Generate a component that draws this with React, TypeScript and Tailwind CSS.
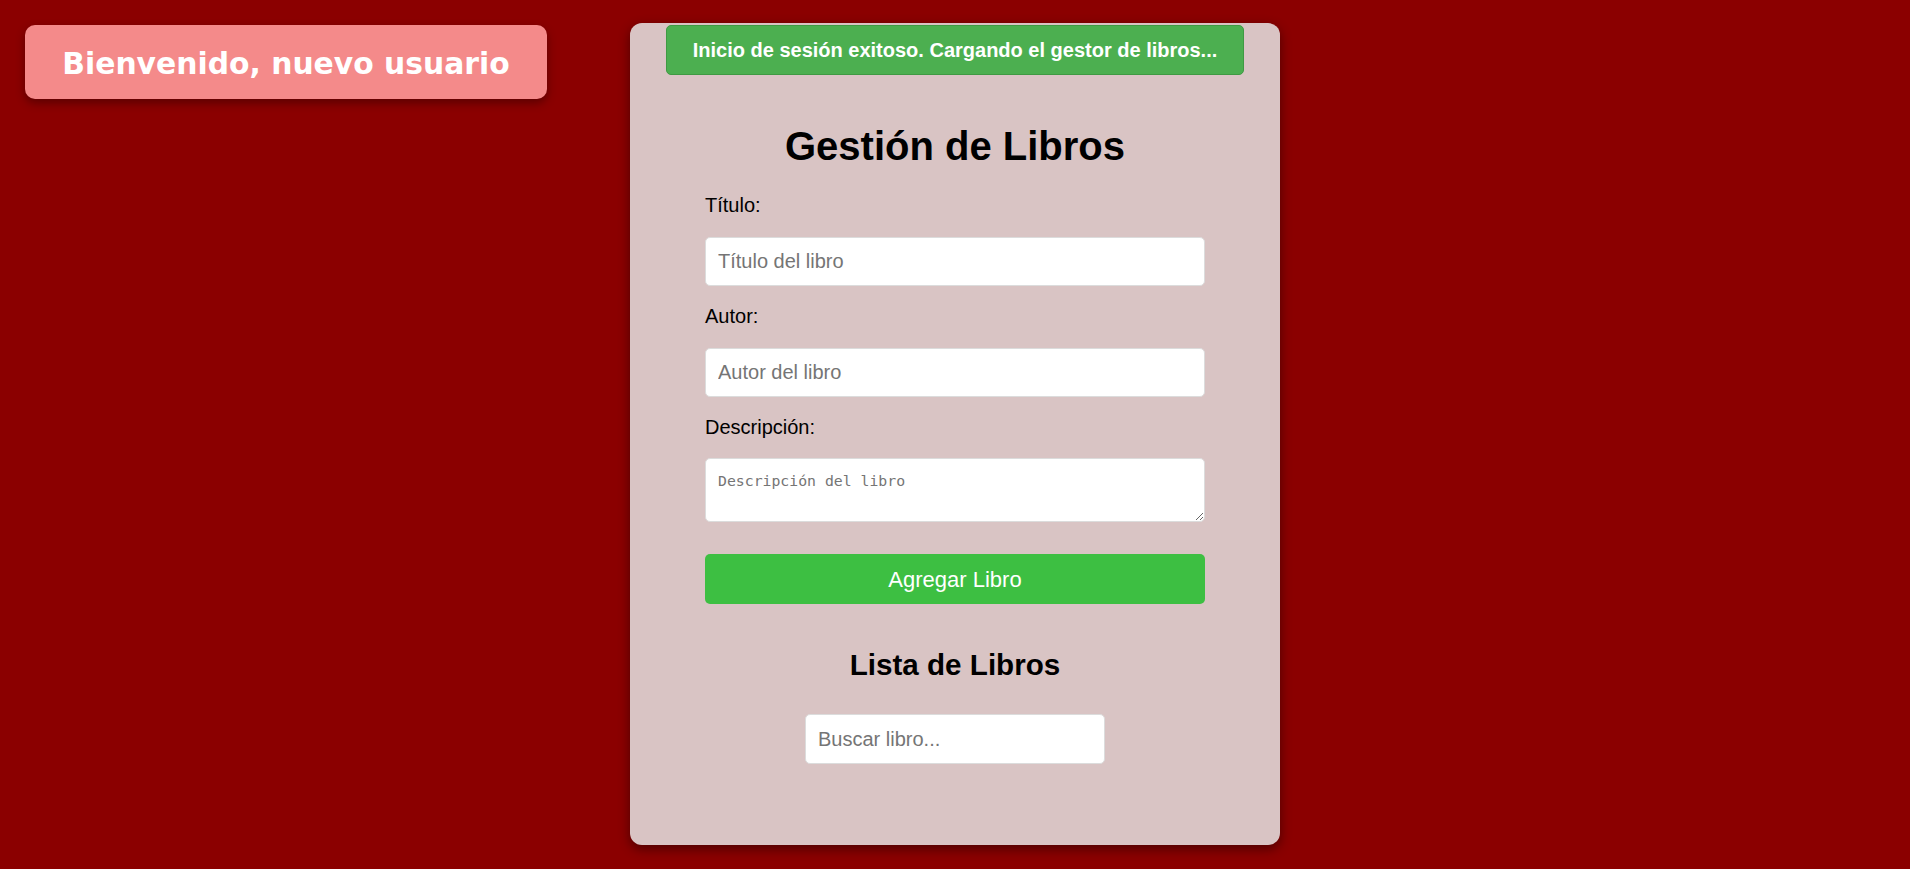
import React from "react";

export default function App() {
  return (
    <div className="min-h-[869px] w-full bg-[#8b0000] font-['Liberation_Sans',Arial,sans-serif] flex items-start">
      {/* welcome badge */}
      <div className="ml-[25px] mt-[25px] w-[522px] h-[74px] shrink-0 flex items-center justify-center pt-[4px] rounded-[10px] bg-[#f48a8a] shadow-[0_4px_10px_rgba(0,0,0,0.35)]">
        <span className="font-['DejaVu_Sans',Verdana,sans-serif] font-bold text-[29.8px] text-white leading-none">
          Bienvenido, nuevo usuario
        </span>
      </div>

      {/* book manager card */}
      <div className="ml-[83px] mt-[23px] w-[650px] h-[822px] shrink-0 rounded-[12px] bg-[#d9c4c4] shadow-[0_4px_12px_rgba(0,0,0,0.45)] flex flex-col items-center">
        <div className="mt-[2px] w-[578px] h-[50px] rounded-[5px] border border-[#3f9a43] bg-[#4caf50] flex items-center justify-center">
          <span className="text-white font-bold text-[20px] leading-none">
            Inicio de sesión exitoso. Cargando el gestor de libros...
          </span>
        </div>

        <h1 className="mt-[48px] text-[40px] leading-[46px] font-bold text-black">Gestión de Libros</h1>

        <form className="w-[500px] mt-[25px] flex flex-col" onSubmit={(e) => e.preventDefault()}>
          <label className="text-[20px] leading-[23px] text-black">Título:</label>
          <input
            type="text"
            placeholder="Título del libro"
            className="mt-[20px] h-[49px] w-full rounded-[5px] border border-[#dcdcdc] bg-white px-3 text-[20px] text-black placeholder:text-[#757575] outline-none"
          />
          <label className="mt-[19px] text-[20px] leading-[23px] text-black">Autor:</label>
          <input
            type="text"
            placeholder="Autor del libro"
            className="mt-[20px] h-[49px] w-full rounded-[5px] border border-[#dcdcdc] bg-white px-3 text-[20px] text-black placeholder:text-[#757575] outline-none"
          />
          <label className="mt-[19px] text-[20px] leading-[23px] text-black">Descripción:</label>
          <textarea
            placeholder="Descripción del libro"
            className="mt-[19px] h-[64px] w-full rounded-[5px] border border-[#dcdcdc] bg-white px-3 pt-[13px] pb-[8px] font-['DejaVu_Sans_Mono',monospace] text-[14.8px] leading-[17px] text-black placeholder:text-[#757575] outline-none"
          />
          <button
            type="submit"
            className="mt-[32px] h-[50px] w-full rounded-[5px] bg-[#3dbf42] text-white text-[22px]"
          >
            Agregar Libro
          </button>
        </form>

        <h2 className="mt-[44px] text-[29.6px] leading-[34px] font-bold text-black">Lista de Libros</h2>

        <input
          type="text"
          placeholder="Buscar libro..."
          className="mt-[32px] h-[50px] w-[300px] rounded-[5px] border border-[#dcdcdc] bg-white px-3 text-[20px] text-black placeholder:text-[#757575] outline-none"
        />
      </div>
    </div>
  );
}
